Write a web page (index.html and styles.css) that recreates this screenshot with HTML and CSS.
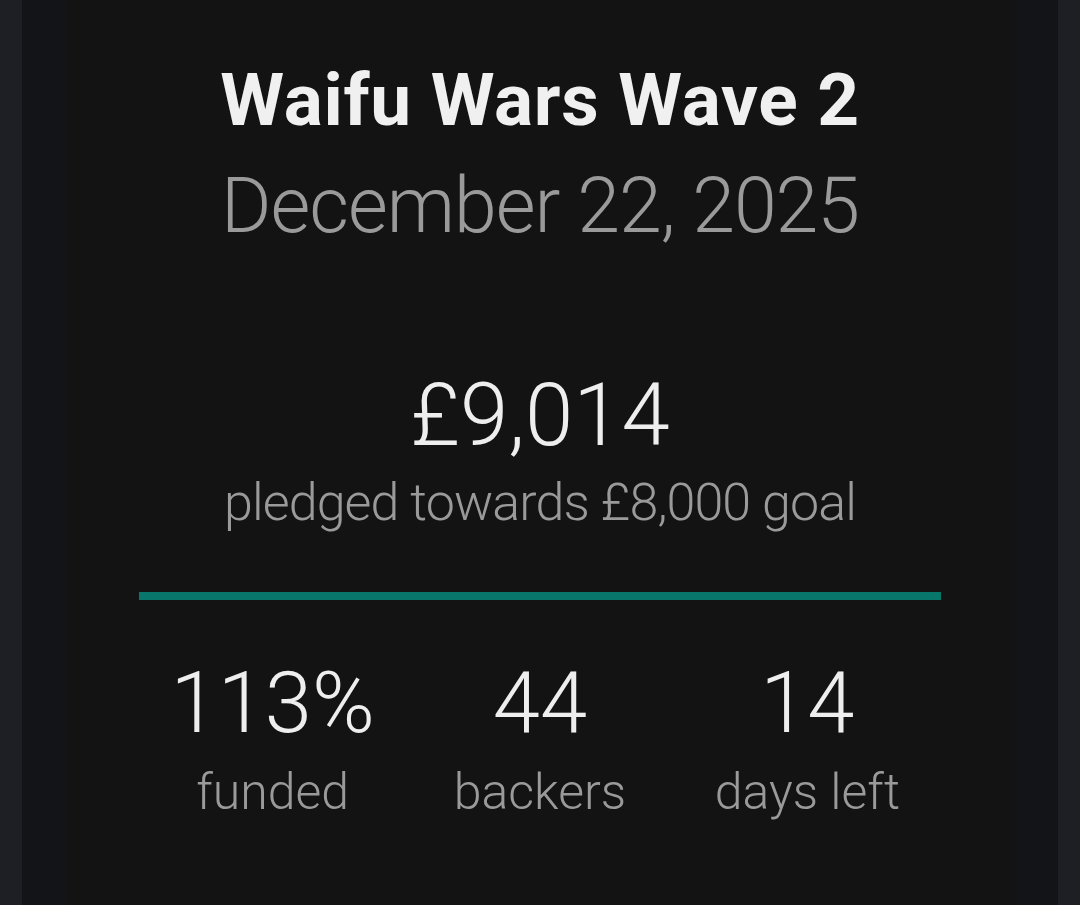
FILE: index.html
```html
<!DOCTYPE html>
<html lang="en">
<head>
<meta charset="utf-8">
<title>Waifu Wars Wave 2</title>
<link rel="stylesheet" href="styles.css">
</head>
<body>
<div class="frame">
  <div class="edge"></div>
  <div class="gutter"></div>
  <main class="panel">
    <h1 class="title">Waifu Wars Wave 2</h1>
    <div class="date">December 22, 2025</div>
    <div class="amount">£9,014</div>
    <div class="pledged">pledged towards £8,000 goal</div>
    <div class="progress"><div class="progress-fill" style="width:100%"></div></div>
    <div class="stats">
      <div class="stat">
        <div class="stat-value">113%</div>
        <div class="stat-label">funded</div>
      </div>
      <div class="stat">
        <div class="stat-value">44</div>
        <div class="stat-label">backers</div>
      </div>
      <div class="stat">
        <div class="stat-value">14</div>
        <div class="stat-label">days left</div>
      </div>
    </div>
  </main>
  <div class="gutter"></div>
  <div class="edge"></div>
</div>
</body>
</html>
```

FILE: styles.css
```css
html, body {
  margin: 0;
  padding: 0;
  height: 100%;
  background: #131313;
  font-family: Roboto, "Noto Sans", "Liberation Sans", sans-serif;
}

.frame {
  display: grid;
  grid-template-columns: 22px 43px 1fr 42px 22px;
  height: 905px;
  overflow: hidden;
}

.edge {
  background: #1e1f24;
}

.gutter {
  background: #131418;
}

.panel {
  background: #131313;
  display: flex;
  flex-direction: column;
  align-items: center;
  padding: 55px 75px 0 74px;
  text-align: center;
}

.title {
  margin: 0;
  font-size: 73px;
  line-height: 90px;
  font-weight: 700;
  letter-spacing: 0.7px;
  color: #f0f0f0;
}

.date {
  margin-top: 11px;
  font-size: 77px;
  line-height: 100px;
  font-weight: 300;
  letter-spacing: -1px;
  color: #9a9a9a;
}

.amount {
  margin-top: 109px;
  font-size: 87px;
  line-height: 100px;
  font-weight: 300;
  color: #eeeeee;
}

.pledged {
  margin-top: 3px;
  font-size: 52px;
  line-height: 70px;
  font-weight: 300;
  letter-spacing: -0.9px;
  color: #9a9a9a;
}

.progress {
  align-self: stretch;
  margin-top: 54px;
  height: 8px;
  background: #2a2a2a;
}

.progress-fill {
  height: 100%;
  background: #08766a;
}

.stats {
  align-self: stretch;
  display: grid;
  grid-template-columns: repeat(3, 1fr);
  margin-top: 53px;
}

.stat {
  display: flex;
  flex-direction: column;
  align-items: center;
}

.stat-value {
  font-size: 85px;
  line-height: 100px;
  font-weight: 300;
  color: #eeeeee;
}

.stat-label {
  margin-top: 9px;
  font-size: 50px;
  line-height: 60px;
  font-weight: 300;
  color: #9a9a9a;
}
```
